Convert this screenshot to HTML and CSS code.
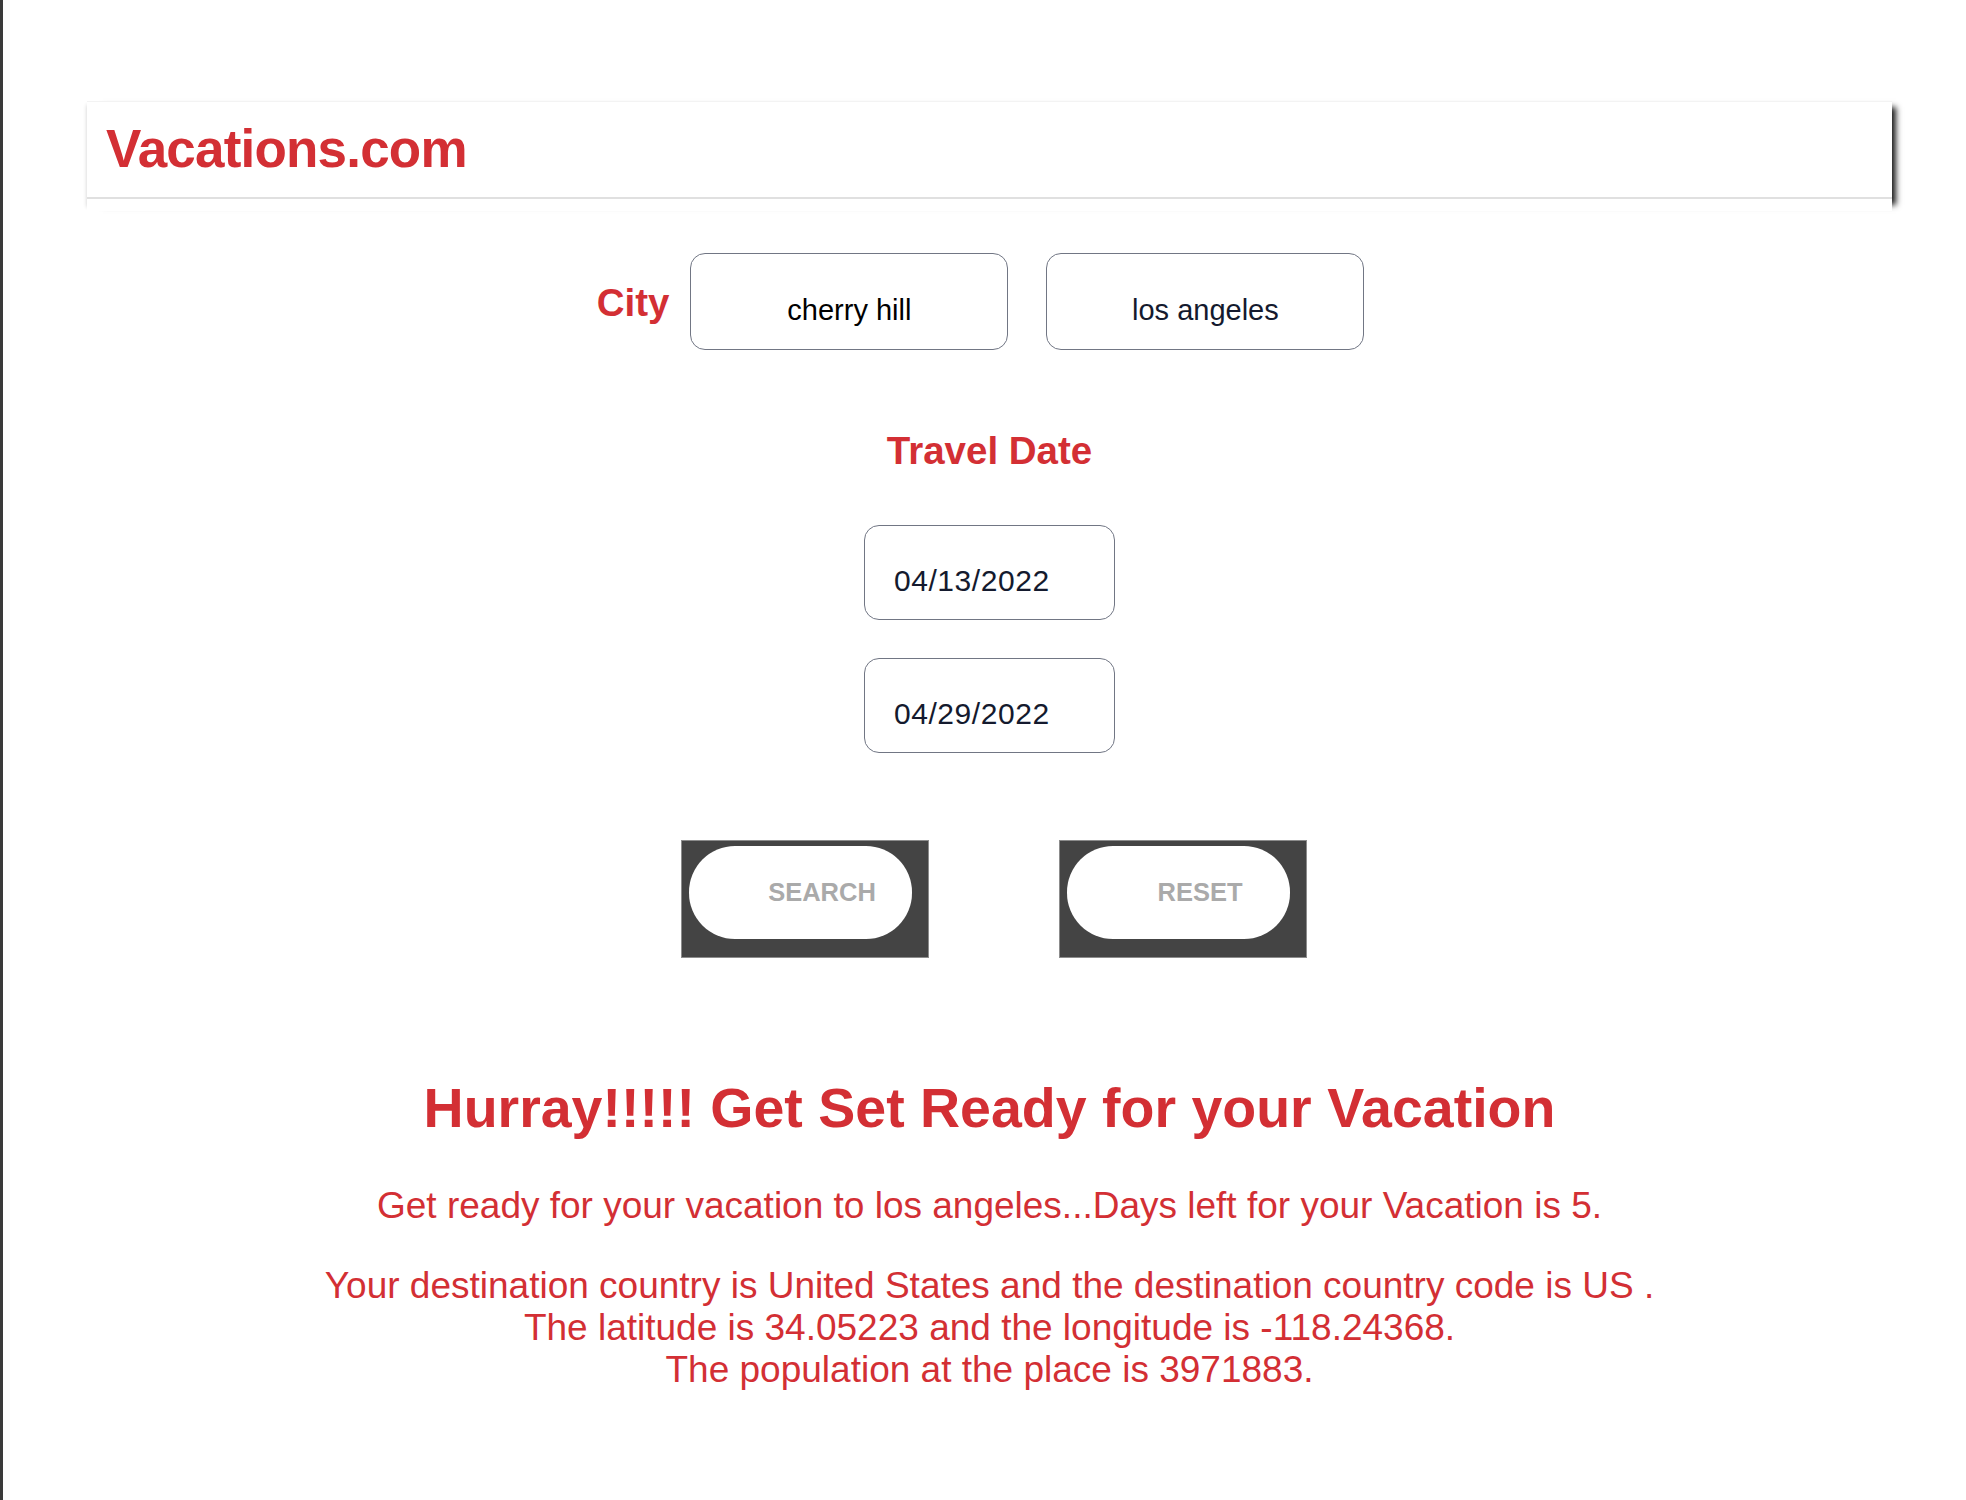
FILE: index.html
```html
<!DOCTYPE html>
<html lang="en">
<head>
<meta charset="utf-8">
<title>Vacations.com</title>
<link rel="stylesheet" href="styles.css">
</head>
<body>
<div class="page">
  <header class="site-header">
    <div class="brand-bar"><h1 class="brand">Vacations.com</h1></div>
  </header>
  <main class="content">
    <form class="search-form">
      <div class="city-row">
        <label class="field-label city-label">City</label>
        <input class="field city-input" type="text" value="cherry hill">
        <input class="field city-input city-input--dest" type="text" value="los angeles">
      </div>
      <div class="field-label date-label">Travel Date</div>
      <div class="date-stack">
        <input class="field date-input" type="text" value="04/13/2022">
        <input class="field date-input" type="text" value="04/29/2022">
      </div>
      <div class="actions">
        <span class="btn-frame"><button type="button" class="btn">SEARCH</button></span>
        <span class="btn-frame"><button type="button" class="btn">RESET</button></span>
      </div>
    </form>
    <section class="result">
      <h2 class="result-title">Hurray!!!!! Get Set Ready for your Vacation</h2>
      <p class="result-text result-text--first">Get ready for your vacation to los angeles...Days left for your Vacation is 5.</p>
      <p class="result-text">Your destination country is United States and the destination country code is US .<br>The latitude is 34.05223 and the longitude is -118.24368.<br>The population at the place is 3971883.</p>
    </section>
  </main>
</div>
</body>
</html>
```

FILE: styles.css
```css
* {
  box-sizing: border-box;
}

html,
body {
  margin: 0;
  padding: 0;
  background: #ffffff;
}

body {
  font-family: "Liberation Sans", Arial, Helvetica, sans-serif;
  color: #d32f34;
}

.page {
  border-left: 3px solid #3a3a3a;
  min-height: 1500px;
  padding: 101px 74px 0 84px;
}

.site-header {
  background: #ffffff;
  border-top: 1px solid #f3f3f3;
  padding-bottom: 12px;
  box-shadow: 10px 0 6px -6px rgba(0, 0, 0, 0.9), -4px 0 4px -4px rgba(0, 0, 0, 0.2);
}

.brand-bar {
  padding: 17px 19px 18px;
  border-bottom: 2px solid #e0e0e0;
}

.brand {
  margin: 0;
  font-size: 53px;
  line-height: 60px;
  font-weight: 700;
  letter-spacing: -0.8px;
  color: #d32f34;
}

.content {
  display: flex;
  flex-direction: column;
  align-items: center;
}

.search-form {
  display: flex;
  flex-direction: column;
  align-items: center;
  width: 100%;
}

.field-label {
  font-size: 38.5px;
  font-weight: 700;
  line-height: normal;
  color: #d32f34;
}

.city-row {
  display: flex;
  align-items: center;
  margin-top: 42px;
  padding-right: 18px;
}

.city-label {
  margin-top: 3px;
  margin-right: 21px;
}

.field {
  border: 1.5px solid #717684;
  border-radius: 15px;
  background: #ffffff;
  font-family: "Liberation Sans", Arial, Helvetica, sans-serif;
  outline: none;
  margin: 0;
}

.city-input {
  width: 318px;
  height: 97px;
  padding: 28px 10px 10px;
  font-size: 29px;
  text-align: center;
  color: #000000;
}

.city-input--dest {
  margin-left: 38px;
  color: #141a2e;
}

.date-label {
  margin-top: 79px;
}

.date-stack {
  display: flex;
  flex-direction: column;
  gap: 38px;
  margin-top: 52px;
}

.date-input {
  width: 251px;
  height: 95px;
  padding: 27px 10px 10px 29px;
  font-size: 30px;
  letter-spacing: 0.55px;
  color: #141a2e;
  text-align: left;
}

.actions {
  display: flex;
  gap: 130px;
  margin-top: 87px;
  padding-left: 8px;
}

.btn-frame {
  display: block;
  background: #444444;
  border: 1px solid #8c8c8c;
  padding: 5px 16px 18px 7px;
}

.btn {
  display: block;
  width: 223px;
  height: 93px;
  border: none;
  border-radius: 46px;
  background: #ffffff;
  padding: 0 0 0 44px;
  font-family: "Liberation Sans", Arial, Helvetica, sans-serif;
  font-size: 25.5px;
  font-weight: 700;
  color: #aaaaaa;
  text-align: center;
  cursor: pointer;
}

.result {
  width: 100%;
  margin-top: 118px;
  text-align: center;
}

.result-title {
  margin: 0;
  font-size: 55.5px;
  font-weight: 700;
  line-height: normal;
  color: #d32f34;
}

.result-text {
  margin: 38px 0 0;
  font-size: 37px;
  line-height: normal;
  color: #d32f34;
}

.result-text--first {
  margin-top: 45px;
}
```
